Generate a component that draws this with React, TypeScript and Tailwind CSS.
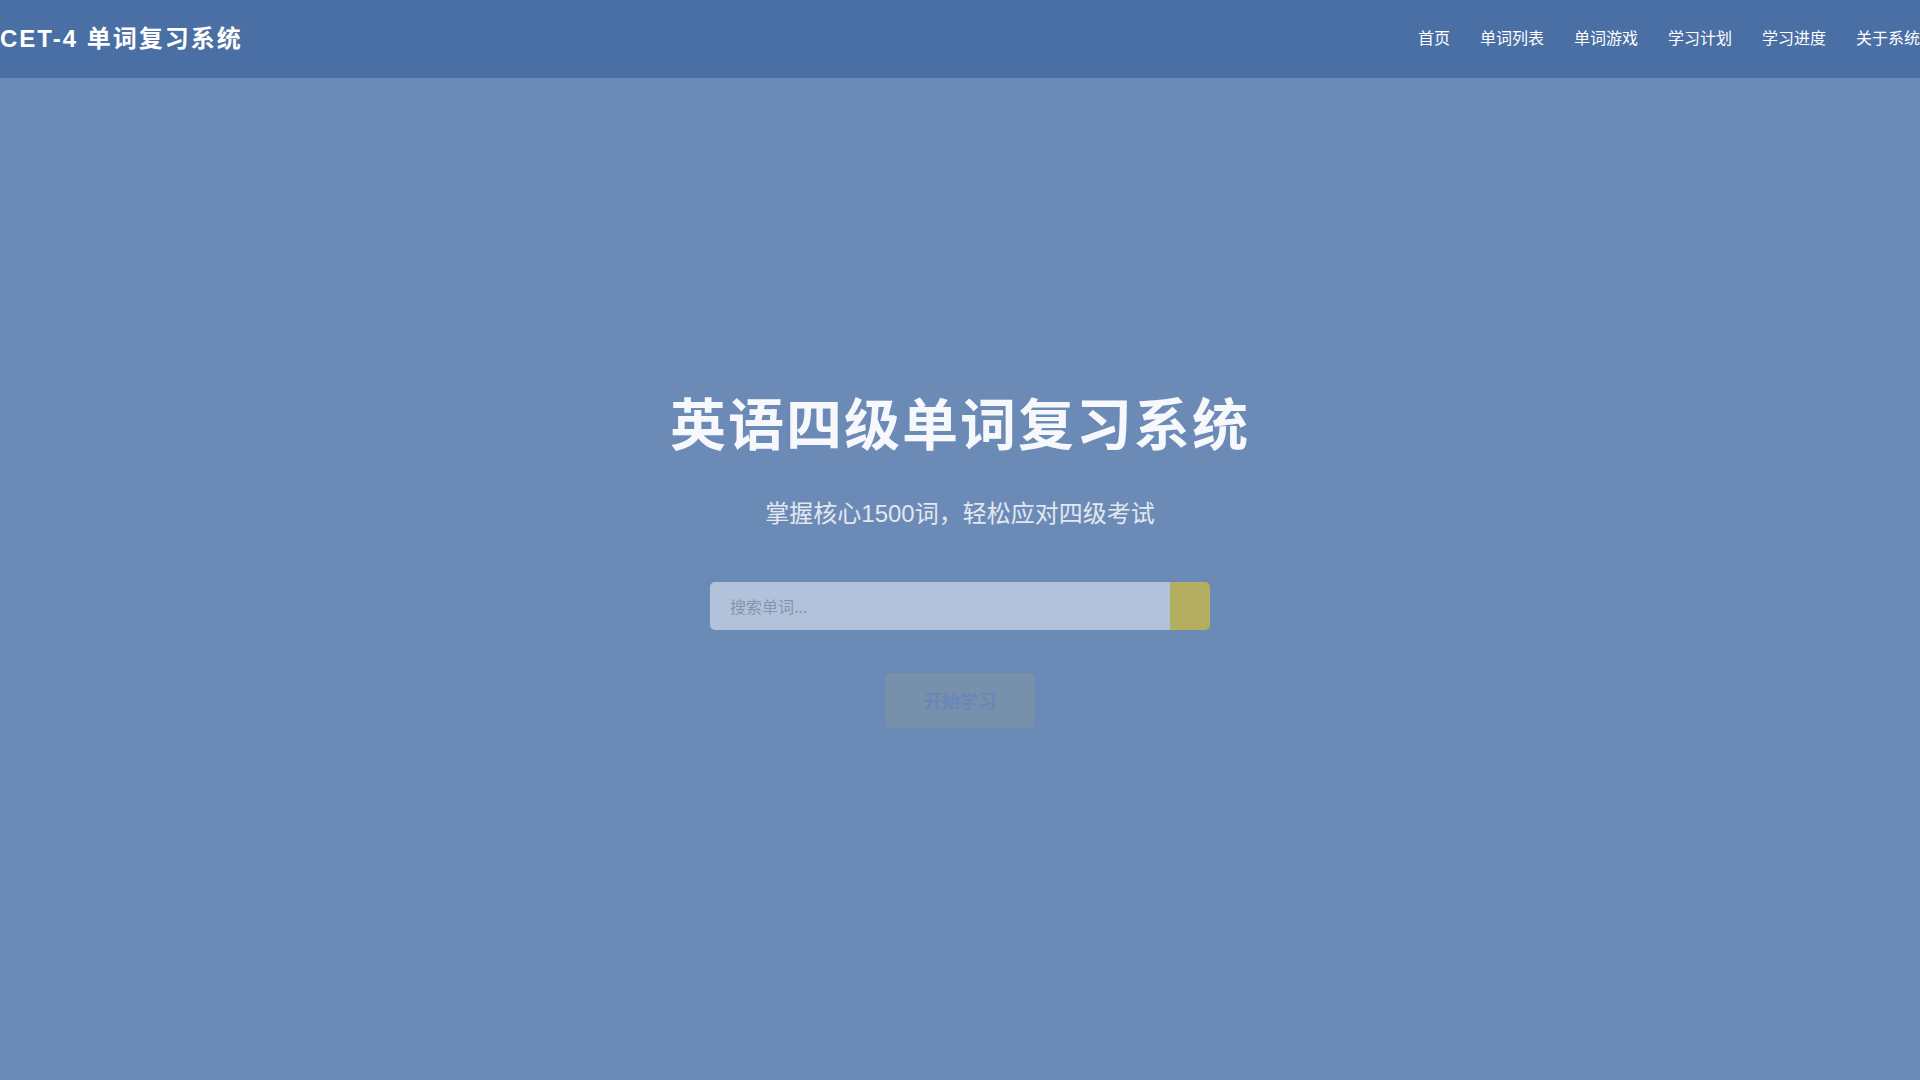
import React from "react";

export default function App() {
  const nav = ["首页", "单词列表", "单词游戏", "学习计划", "学习进度", "关于系统"];
  return (
    <div
      className="w-[1920px] h-[1080px] overflow-hidden bg-[#6c8ab6] flex flex-col"
      style={{ fontFamily: '"Liberation Sans", "Noto Sans CJK SC", sans-serif' }}
    >
      <header className="h-[78px] shrink-0 bg-[#4a6fa5] flex items-center justify-between">
        <div className="text-[24px] font-bold tracking-[2px] text-white leading-none">
          CET-4 单词复习系统
        </div>
        <nav className="flex items-center gap-[30px]">
          {nav.map((n) => (
            <a key={n} className="text-[16px] text-white leading-none cursor-pointer">
              {n}
            </a>
          ))}
        </nav>
      </header>
      <main className="flex-1 flex flex-col items-center pt-[309px]">
        <h1 className="text-[56px] leading-[67px] font-bold tracking-[2px] text-[#f6f8fc]" style={{ fontFamily: '"Noto Sans CJK SC", sans-serif' }}>
          英语四级单词复习系统
        </h1>
        <p className="mt-[42px] text-[24px] leading-[36px] text-white/80">
          掌握核心1500词，轻松应对四级考试
        </p>
        <div className="mt-[50px] flex w-[500px] h-[48px] rounded-[5px] overflow-hidden">
          <input
            type="text"
            placeholder="搜索单词..."
            className="flex-1 h-full bg-[#b2c2da] pl-[20px] text-[16px] outline-none placeholder:text-[#8494ad] text-[#333]"
            style={{ fontFamily: '"Noto Sans CJK SC", sans-serif' }}
          />
          <button className="w-[40px] h-full bg-[#b3ae60]"></button>
        </div>
        <button className="mt-[43px] w-[150px] h-[55px] rounded-[5px] bg-[#7790ab] text-[18px] font-bold text-[#6886ba]" style={{ fontFamily: '"Noto Sans CJK SC", sans-serif' }}>
          开始学习
        </button>
      </main>
    </div>
  );
}
